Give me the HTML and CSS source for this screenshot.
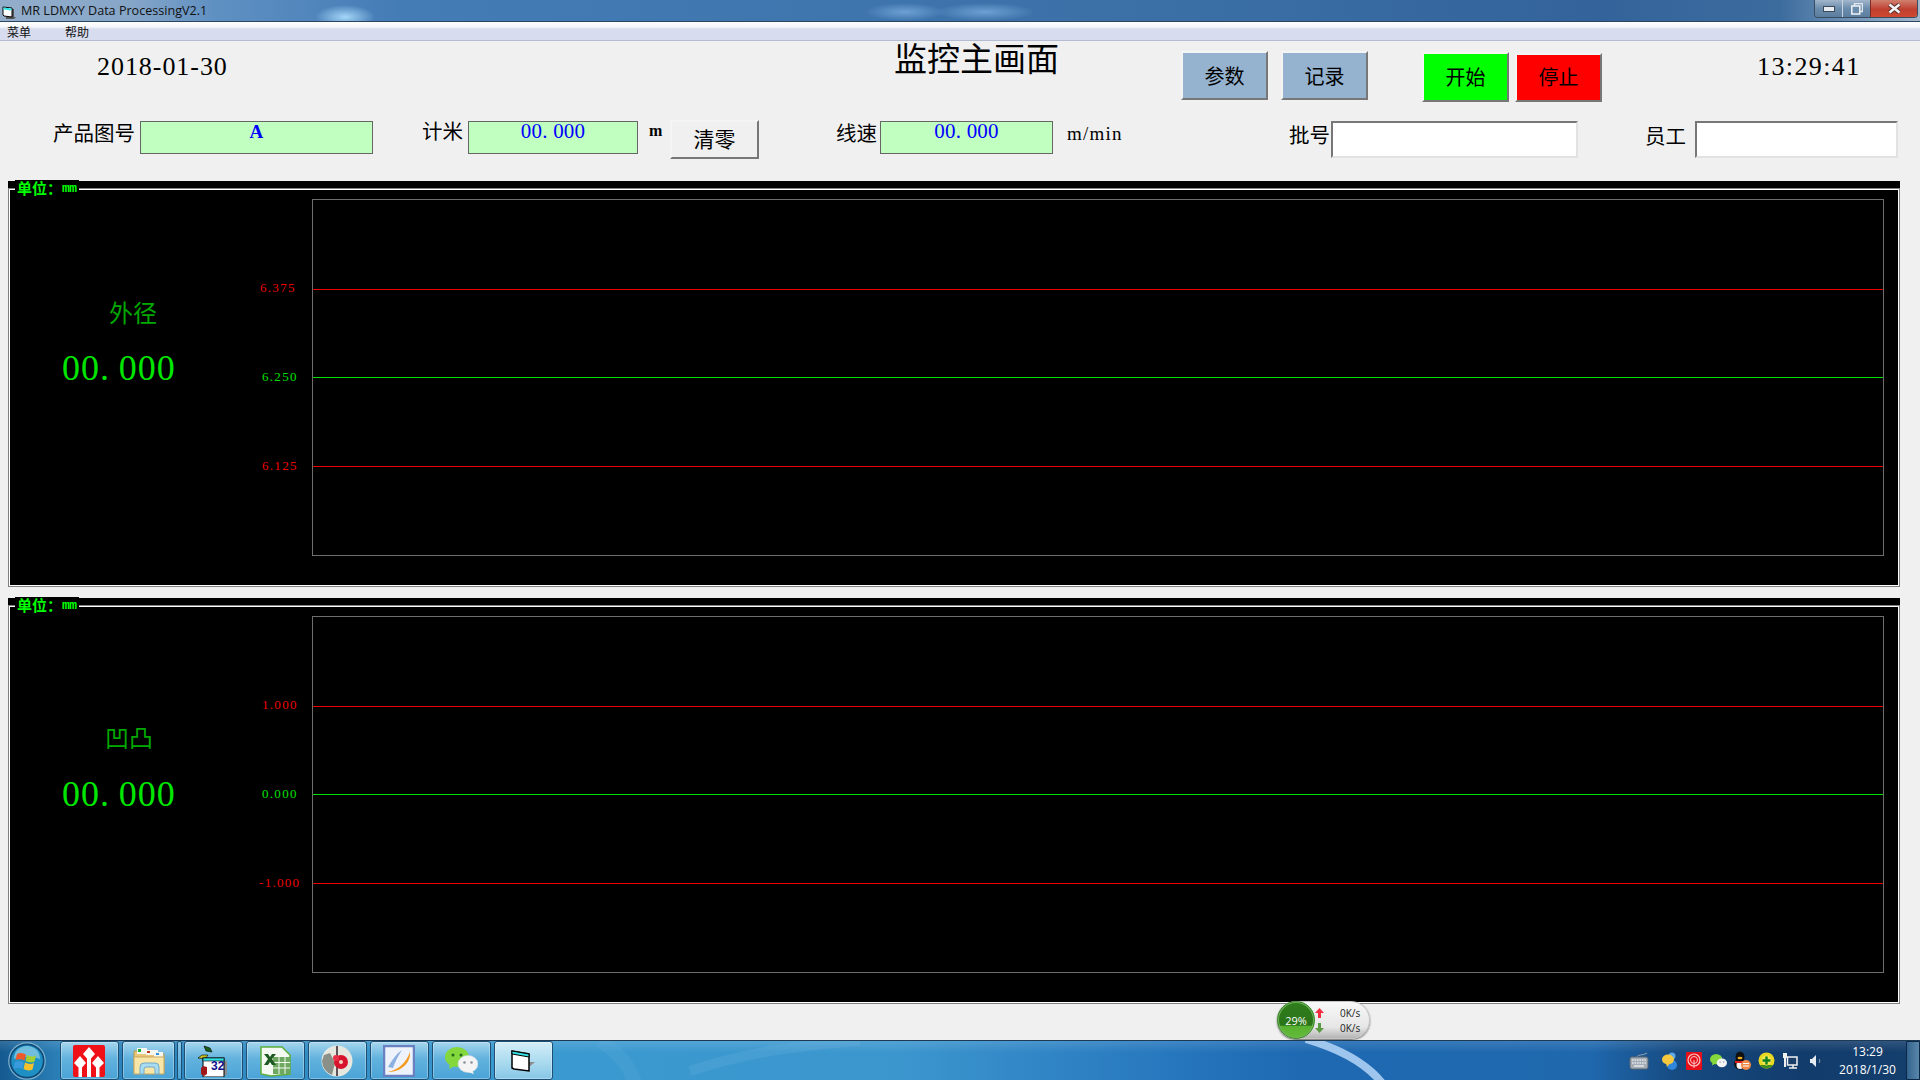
FILE: index.html
```html
<!DOCTYPE html>
<html lang="zh-CN">
<head>
<meta charset="utf-8">
<title>MR LDMXY Data ProcessingV2.1</title>
<link rel="stylesheet" href="styles.css">
</head>
<body>
<header class="titlebar">
  <svg class="app-icon" width="14" height="13" viewBox="0 0 14 13"><path d="M9 3h3v8h2l-2 2H4v-2h5z" fill="#555"/><path d="M1 1l9 1v9l-8-1-1-1z" fill="#fff" stroke="#000"/><path d="M1.500 1.500l8 1v2l-8-1z" fill="#2fe6e6"/></svg>
  <span class="app-title">MR LDMXY Data ProcessingV2.1</span>
  <div class="winbtns">
    <div class="winbtn win-min"><svg width="12" height="6" viewBox="0 0 12 6"><rect x=".5" y=".5" width="11" height="5" fill="#e8edf2" stroke="#3c4a5a"/></svg></div>
    <div class="winbtn win-max"><svg width="12" height="12" viewBox="0 0 12 12"><rect x="3.500" y=".5" width="8" height="8" fill="none" stroke="#dfe6ee" stroke-width="1.500"/><rect x=".8" y="3" width="8" height="8" fill="#6c8cac" stroke="#eef2f6" stroke-width="1.500"/></svg></div>
    <div class="winbtn win-close"><svg width="15" height="11" viewBox="0 0 15 11"><path d="M2.500 1.500l10 8M12.500 1.500l-10 8" stroke="#5a3030" stroke-width="4.500"/><path d="M2.500 1.500l10 8M12.500 1.500l-10 8" stroke="#f4f4f4" stroke-width="2.500"/></svg></div>
  </div>
</header>
<nav class="menubar"><span class="menu-item">菜单</span><span class="menu-item menu-help">帮助</span></nav>

<main class="content">
  <section class="row row-top">
    <div class="clock-text date">2018-01-30</div>
    <h1 class="screen-title">监控主画面</h1>
    <button class="btn btn-blue btn-params">参数</button>
    <button class="btn btn-blue btn-log">记录</button>
    <button class="btn btn-start">开始</button>
    <button class="btn btn-stop">停止</button>
    <div class="clock-text time">13:29:41</div>
  </section>
  <section class="row row-fields">
    <span class="label l-part">产品图号</span>
    <div class="box box-part"><span class="box-text">A</span></div>
    <span class="label l-meter">计米</span>
    <div class="box box-meter"><span class="box-text">00<span class="dot-s">.</span>000</span></div>
    <span class="unit u-m">m</span>
    <button class="btn btn-clear">清零</button>
    <span class="label l-speed">线速</span>
    <div class="box box-speed"><span class="box-text">00<span class="dot-s">.</span>000</span></div>
    <span class="unit u-mmin">m/min</span>
    <span class="label l-batch">批号</span>
    <div class="input in-batch"></div>
    <span class="label l-staff">员工</span>
    <div class="input in-staff"></div>
  </section>

  <section class="panel">
    <div class="legend"><span class="legend-cn">单位：</span><span class="legend-mm">mm</span></div>
    <div class="group">
      <div class="readout readout-a">
        <div class="r-name name-a">外径</div>
        <div class="r-value value-a">00<span class="dot-l">.</span>000</div>
      </div>
      <div class="axis">
        <span class="tick red t-a1">6.375</span>
        <span class="tick green t-a2">6.250</span>
        <span class="tick red t-a3">6.125</span>
      </div>
      <div class="plot">
        <div class="band b1"></div><div class="band b2 line-red"></div><div class="band b3 line-green"></div><div class="band b4 line-red"></div>
      </div>
    </div>
  </section>

  <section class="panel panel-b">
    <div class="legend"><span class="legend-cn">单位：</span><span class="legend-mm">mm</span></div>
    <div class="group">
      <div class="readout readout-b">
        <div class="r-name name-b">凹凸</div>
        <div class="r-value value-b">00<span class="dot-l">.</span>000</div>
      </div>
      <div class="axis">
        <span class="tick red t-b1">1.000</span>
        <span class="tick green t-b2">0.000</span>
        <span class="tick red t-b3">-1.000</span>
      </div>
      <div class="plot">
        <div class="band b1"></div><div class="band b2 line-red"></div><div class="band b3 line-green"></div><div class="band b4 line-red"></div>
      </div>
    </div>
  </section>

  <aside class="netmeter">
    <div class="net-ball">29%</div>
    <div class="net-rows">
      <div class="net-row"><svg width="9" height="10" viewBox="0 0 9 10"><path d="M4.500 0L9 5H6v5H3V5H0z" fill="#f03040"/></svg><span>0K/s</span></div>
      <div class="net-row"><svg width="9" height="10" viewBox="0 0 9 10"><path d="M4.500 10L0 5h3V0h3v5h3z" fill="#5a9a40"/></svg><span>0K/s</span></div>
    </div>
  </aside>
</main>

<footer class="taskbar">
  <svg class="streak" width="1920" height="40" viewBox="0 0 1920 40"><path d="M1306-2C1340 8 1366 22 1382 42" fill="none" stroke="#b4d6f8" stroke-width="8" opacity=".85"/><path d="M690 30C740 14 780 6 860 0" fill="none" stroke="#8cc4ea" stroke-width="10" opacity=".14"/><path d="M600 0C620 12 630 26 635 42" fill="none" stroke="#8cc4ea" stroke-width="14" opacity=".1"/></svg>
  <div class="orb-slot">
    <svg width="38" height="38" viewBox="0 0 38 38">
      <circle cx="19" cy="19" r="18.200" fill="#0f4a78" stroke="#7fb4d0" stroke-width="1.200"/>
      <circle cx="19" cy="19" r="15.800" fill="#1f90c4"/>
      <path d="M6 17c0-8 6-13 13-13s13 5 13 13c-7-3-19-3-26 0z" fill="#a8dcf0" opacity=".6"/>
      <path d="M9 12c3-1.500 6-1 9 .5l-1.500 6c-3-1.500-6-1.500-9-.5z" fill="#ee5a2a"/>
      <path d="M19 13c3 1.500 6 2 9 .5l-1.500 6c-3 1.500-6 1-9-.5z" fill="#a4d034"/>
      <path d="M7 20c3-1 6-1 9 .5L14.500 27c-3-1.500-6-1.500-9-.5z" fill="#3a9ade"/>
      <path d="M17 20.500c3 1.500 6 2 9 .5L24.500 27.500c-3 1.500-6 1-9-.5z" fill="#f6c22c"/>
    </svg>
  </div>
  <div class="tb-btn">
    <svg width="32" height="32" viewBox="0 0 32 32"><rect width="32" height="32" rx="2" fill="#f01018"/><path d="M16 2l6 7-4 4.500V32h-4V13.500L10 9zM7 11l6 7-4 4.500V32H5.500V22.500L1 18zM25 11l6 7-4.500 4.500V32H23V22.500L19 18z" fill="#fff"/></svg>
  </div>
  <div class="tb-btn tb-folder">
    <svg width="32" height="28" viewBox="0 0 32 28"><path d="M1 4h11l2 2h15q2 0 2 2v18H1z" fill="#e8c878" stroke="#b89850"/><rect x="4" y="1" width="10" height="6" fill="#f6f6f0"/><rect x="5" y="2" width="3" height="3" fill="#18b030"/><rect x="13" y="3" width="12" height="5" fill="#f6f6f0"/><rect x="14" y="4" width="3" height="2" fill="#c03820"/><rect x="21" y="5" width="9" height="5" fill="#f6f6f0"/><rect x="23" y="6" width="3" height="2" fill="#3090e0"/><path d="M1 10h30v17H1z" fill="#f8e6a8" stroke="#c8a860"/><path d="M7 27v-7q0-4 4-4h11q4 0 4 4v7h-4v-5q0-2-2-2h-7q-2 0-2 2v5z" fill="#a8dcf0" stroke="#70a8c8"/></svg>
  </div>
  <div class="tb-sliver"></div>
  <div class="tb-btn">
    <svg width="32" height="32" viewBox="0 0 32 32"><rect x="9" y="16" width="21" height="14" fill="#8c8c8c"/><path d="M7 1l6 2 2 4-6-1z" fill="#186018" stroke="#000" stroke-width=".6"/><path d="M1 13l4-3h6l-3 4z" fill="#c8c020" stroke="#000" stroke-width=".6"/><rect x="6" y="13" width="21" height="19" fill="#fff" stroke="#000"/><rect x="6" y="13" width="21" height="3" fill="#30e0e0" stroke="#000" stroke-width=".6"/><path d="M6 21l4 1v7l-3 2-3-2v-6z" fill="#a01818"/><text x="14" y="25" class="icon-num">32</text></svg>
  </div>
  <div class="tb-btn">
    <svg width="31" height="32" viewBox="0 0 31 32"><path d="M1 2h21l8 8v19l-19 2-10-2z" fill="#f4faf2" stroke="#5cae3a" stroke-width="1.500"/><rect x="13" y="12" width="17" height="17" fill="#6ea860"/><path d="M13 17.500h17M13 23h17M19 12v17M25 12v17" stroke="#f4faf2"/><path d="M4 9h4l2 3 2-3h4l-4 5 4 6h-4l-2-3-2 3H4l4-6z" fill="#1c5a20"/></svg>
  </div>
  <div class="tb-btn">
    <svg width="32" height="32" viewBox="0 0 32 32"><circle cx="16" cy="16" r="15.500" fill="#e6e8e0"/><path d="M1 16a15 15 0 0 0 10 14l3-12-5-10-6 2z" fill="#8a9088"/><path d="M16 1v30" stroke="#302028" stroke-width="1.500"/><circle cx="20" cy="17" r="7" fill="#d8142c"/><circle cx="15" cy="13" r="3" fill="#e83048"/><circle cx="20" cy="17" r="2" fill="#f4d0c0"/></svg>
  </div>
  <div class="tb-btn">
    <svg width="32" height="32" viewBox="0 0 32 32"><rect x="1" y="1" width="30" height="30" fill="#eef3fb" stroke="#6a80c0" stroke-width="2.500"/><path d="M5 27c10-2 18-9 22-20 1 10-8 20-22 20z" fill="#f49a1c"/><path d="M5 22C9 15 13 9 19 5 15 11 12 17 10 23z" fill="#8cb0e0"/></svg>
  </div>
  <div class="tb-btn">
    <svg width="33" height="27" viewBox="0 0 33 27"><ellipse cx="12" cy="10" rx="12" ry="10" fill="#84d83c"/><path d="M5 16l-1 6 6-3z" fill="#84d83c"/><circle cx="8" cy="8" r="1.500" fill="#1e6a18"/><circle cx="16" cy="8" r="1.500" fill="#1e6a18"/><ellipse cx="23" cy="17" rx="10" ry="8.500" fill="#f4f4f4" stroke="#c8d8e0" stroke-width=".6"/><path d="M27 23l2 4-6-2z" fill="#f4f4f4"/><circle cx="19.500" cy="15.500" r="1.300" fill="#8a9298"/><circle cx="26.500" cy="15.500" r="1.300" fill="#8a9298"/></svg>
  </div>
  <div class="tb-btn tb-active">
    <svg width="24" height="22" viewBox="0 0 24 22"><path d="M18 12h6l-6 5z" fill="#8c8c8c"/><path d="M1 1l17 3v17l-15-2-2-1z" fill="#fff" stroke="#000" stroke-width="1.500"/><path d="M1 1l17 3v3L1 4z" fill="#30e0e0" stroke="#000"/></svg>
  </div>
  <div class="tb-spacer"></div>
  <div class="tray">
    <div class="tray-item tray-kbd"><svg width="20" height="18" viewBox="0 0 20 18"><path d="M8 5c1-3 5-1 10-4" fill="none" stroke="#9aa6b0"/><rect x="1" y="5" width="18" height="12" rx="2" fill="#a4adb5" stroke="#5a6670"/><path d="M3 8h14M3 11h14" stroke="#e4e8ec" stroke-width="1.500" stroke-dasharray="1.500 1"/><path d="M5 14h10" stroke="#e4e8ec" stroke-width="1.500"/></svg></div>
    <div class="tray-item"><svg width="16" height="18" viewBox="0 0 16 18"><circle cx="10" cy="4" r="3.500" fill="#5aa8e8"/><circle cx="10" cy="13" r="5" fill="#3088dc"/><ellipse cx="6" cy="7.500" rx="6" ry="5" fill="#f6c840"/><path d="M4 11l1 4 3-4z" fill="#f6c840"/></svg></div>
    <div class="tray-item"><svg width="16" height="18" viewBox="0 0 16 18"><rect width="16" height="18" rx="1" fill="#e81018"/><circle cx="8" cy="8" r="6" fill="none" stroke="#f8c8c8" stroke-width="1.200"/><circle cx="8" cy="8" r="3.500" fill="none" stroke="#f8c8c8"/><path d="M8 8v8" stroke="#f8c8c8"/></svg></div>
    <div class="tray-item"><svg width="17" height="16" viewBox="0 0 33 27"><ellipse cx="12" cy="10" rx="12" ry="10" fill="#84d83c"/><path d="M5 16l-1 6 6-3z" fill="#84d83c"/><ellipse cx="23" cy="17" rx="10" ry="8.500" fill="#f4f4f4"/><circle cx="19.500" cy="15.500" r="1.300" fill="#8a9298"/><circle cx="26.500" cy="15.500" r="1.300" fill="#8a9298"/></svg></div>
    <div class="tray-item"><svg width="18" height="20" viewBox="0 0 18 20"><ellipse cx="7" cy="6" rx="4.500" ry="5.500" fill="#111"/><ellipse cx="7" cy="13" rx="6" ry="5.500" fill="#111"/><ellipse cx="7" cy="14" rx="3.500" ry="4" fill="#f4f4f4"/><ellipse cx="7" cy="7" rx="2.500" ry="1.200" fill="#f0b020"/><path d="M2 10h10v2H2z" fill="#e02020"/><circle cx="13" cy="14" r="5" fill="#f08848"/><path d="M10 12.500h6M10 15h6" stroke="#fff"/></svg></div>
    <div class="tray-item"><svg width="17" height="17" viewBox="0 0 17 17"><circle cx="8.500" cy="8.500" r="8" fill="#e8d820"/><path d="M2 13a8 8 0 0 0 13 0" fill="#3c8c20"/><circle cx="8.500" cy="8.500" r="5" fill="#f4e850"/><path d="M8.500 4.500v8M4.500 8.500h8" stroke="#108020" stroke-width="2.400"/></svg></div>
    <div class="tray-item"><svg width="16" height="18" viewBox="0 0 16 18"><path d="M1 1h4v5H4v9H2V6H1z" fill="#f0f0f0"/><rect x="5.500" y="5" width="9.500" height="8" fill="#1a3e68" stroke="#f0f0f0" stroke-width="1.500"/><path d="M7 16h8M11 13v3" stroke="#f0f0f0" stroke-width="1.500"/></svg></div>
    <div class="tray-item tray-vol"><svg width="14" height="14" viewBox="0 0 14 14"><path d="M1 5h2l4-4v12L3 9H1z" fill="#e8ecf0"/><path d="M10 5c1 1 1 3 0 4" fill="none" stroke="#8ca0b4"/></svg></div>
  </div>
  <div class="tb-clock"><span>13:29</span><span>2018/1/30</span></div>
  <div class="show-desktop"></div>
</footer>
</body>
</html>
```
FILE: styles.css
```css
* { box-sizing: border-box; }
html, body { margin: 0; padding: 0; }
body {
  width: 1920px;
  height: 1080px;
  overflow: hidden;
  display: flex;
  flex-direction: column;
  background: #f0f0f0;
  color: #000;
  font-family: "Liberation Serif", "Noto Sans CJK SC", serif;
}

/* window chrome */
.titlebar {
  height: 22px;
  flex: none;
  display: flex;
  align-items: flex-start;
  border-bottom: 1px solid #2b4560;
  background:
    radial-gradient(ellipse 30px 12px at 345px 17px, #a4d6f8, rgba(164, 214, 248, 0)),
    radial-gradient(ellipse 40px 9px at 905px 12px, rgba(130, 180, 230, .7), rgba(130, 180, 230, 0)),
    radial-gradient(ellipse 50px 9px at 985px 12px, rgba(130, 180, 230, .7), rgba(130, 180, 230, 0)),
    linear-gradient(90deg, #93aecb 0, #86a6c8 130px, #5f90c2 215px, #447cb6 400px, #3f76ae 800px, #3a6fa5 1200px, #33639a 1600px, #3c6c9e 1780px, #8ca8c4 1890px, #a4b8cc 1920px);
}
.app-icon { margin: 6px 0 0 2px; flex: none; }
.app-title {
  margin: 3px 0 0 5px;
  font: 12.600px/16px "Open Sans", "Liberation Sans", sans-serif;
  color: #111;
  white-space: nowrap;
}
.winbtns {
  margin: 0 2px 0 auto;
  width: 104px;
  height: 18px;
  display: flex;
  border: 1px solid #3a4c62;
  border-top: 0;
  border-radius: 0 0 4px 4px;
  overflow: hidden;
}
.winbtn { display: flex; align-items: center; justify-content: center; height: 100%; }
.win-min { width: 28px; background: linear-gradient(#a2b6cc, #6c8cac 50%, #5c7e9e); border-right: 1px solid #c8d4e0; }
.win-max { width: 27px; background: linear-gradient(#a2b6cc, #6c8cac 50%, #5c7e9e); }
.win-close { flex: 1; background: linear-gradient(#d08070, #c04030 55%, #d04830); border-left: 1px solid #7a3028; }

.menubar {
  height: 19px;
  flex: none;
  display: flex;
  padding: 3px 0 0 7px;
  font: 12px/14px "Noto Sans CJK SC", sans-serif;
  color: #111;
  border-bottom: 1px solid #b4bcd2;
  background: linear-gradient(#ffffff 0, #f4f6fb 5px, #d8dcef 7px, #d8dcef 100%);
}
.menu-help { margin-left: 34px; }

/* form area */
.content { flex: 1; position: relative; min-height: 0; }
.row { display: flex; align-items: flex-start; white-space: nowrap; }
.row-top { height: 80px; }
.row-fields { height: 60px; }

.clock-text { font-size: 26px; line-height: 30px; margin-top: 11px; }
.date { margin-left: 97px; width: 130px; letter-spacing: .95px; }
.time { margin-left: 155px; width: 103px; letter-spacing: 1.400px; }
.screen-title { margin: 0 0 0 667px; width: 164px; font-size: 33px; font-weight: 400; line-height: 38px; text-align: center; }

.btn {
  display: flex;
  align-items: center;
  justify-content: center;
  padding: 0;
  font-family: inherit;
  font-size: 20px;
  color: #000;
  background: #f0f0f0;
  border: 2px solid;
  border-color: #f4f4f4 #777 #777 #f4f4f4;
}
.btn-blue { background: #95b2cf; width: 87px; height: 49px; margin-top: 10px; }
.btn-params { margin-left: 123px; }
.btn-log { margin-left: 13px; padding-bottom: 1px; }
.btn-start { margin: 11px 0 0 54px; width: 87px; height: 50px; padding-bottom: 2px; background: #00ff00; }
.btn-stop { margin: 12px 0 0 6px; width: 87px; height: 49px; padding-bottom: 3px; background: #ff0000; }
.btn-clear { margin: -1px 0 0 10px; width: 89px; height: 39px; padding-bottom: 4px; font-size: 21px; }

.label { font-size: 20.500px; line-height: 24px; height: 24px; }
.l-part { margin: 1px 0 0 53px; width: 82px; }
.l-meter { margin: -1px 0 0 49px; width: 40px; }
.l-speed { margin: 1px 0 0 77px; width: 41px; }
.l-batch { margin: 3px 0 0 167px; width: 40px; }
.l-staff { margin: 4px 0 0 67px; width: 40px; }

.box {
  height: 33px;
  background: #c0ffc0;
  border: 1px solid #666;
  text-align: center;
  color: #0000ff;
  font-size: 21px;
  line-height: 19px;
  letter-spacing: .2px;
}
.box-part { margin-left: 5px; width: 233px; font-size: 19px; font-weight: 700; }
.box-meter { margin-left: 6px; width: 170px; }
.box-speed { margin-left: 3px; width: 173px; }
.dot-s { padding-right: 5.500px; }

.unit { font-size: 19px; line-height: 24px; }
.u-m { margin: -2px 0 0 11px; width: 11px; font-size: 16px; font-weight: 700; }
.u-mmin { margin: 1px 0 0 14px; width: 55px; letter-spacing: 1.200px; }

.input {
  height: 37px;
  background: #fff;
  border: 2px solid;
  border-color: #777 #e2e2e2 #e2e2e2 #777;
}
.in-batch { margin-left: 2px; width: 247px; }
.in-staff { margin-left: 10px; width: 203px; }

/* chart panels */
.panel {
  position: relative;
  width: 1892px;
  height: 406px;
  margin-left: 8px;
  padding-top: 7px;
  background: #000;
}
.panel-b { margin-top: 11px; }
.group {
  height: 399px;
  display: flex;
  padding: 10px 15px 0 0;
  border: 1px solid #808080;
  box-shadow: inset 0 0 0 1px #fff;
}
.legend {
  position: absolute;
  top: -1px;
  left: 7px;
  height: 15px;
  padding: 0 2px;
  background: #000;
  color: #00ff00;
  display: flex;
  align-items: center;
  white-space: nowrap;
}
.legend-cn { font: 700 15px/15px "Noto Sans CJK SC", sans-serif; }
.legend-mm { font: 700 13px/15px "Liberation Mono", monospace; letter-spacing: -.5px; margin-top: 2px; }

.readout { width: 246px; flex: none; }
.readout-a { padding-top: 100px; }
.readout-b { padding-top: 108px; }
.r-name { font-size: 24px; line-height: 30px; color: #00a800; }
.name-a { margin-left: 100px; }
.name-b { margin-left: 96px; }
.r-value { margin-left: 53px; font-size: 36px; line-height: 40px; letter-spacing: .95px; color: #00e600; }
.value-a { margin-top: 19px; }
.value-b { margin-top: 20px; }
.dot-l { padding-right: 9px; }

.axis { width: 57px; flex: none; display: flex; flex-direction: column; align-items: flex-start; padding-top: 81px; }
.tick { height: 16px; font-size: 13px; line-height: 16px; letter-spacing: 1.300px; }
.red { color: #f00000; }
.green { color: #00e000; }
.t-a1 { margin-left: 5px; }
.t-a2 { margin: 73px 0 0 7px; }
.t-a3 { margin: 73px 0 0 7px; }
.t-b1 { margin-left: 7px; }
.t-b2 { margin: 73px 0 0 7px; }
.t-b3 { margin: 73px 0 0 4px; }

.plot {
  flex: 1;
  height: 357px;
  display: flex;
  flex-direction: column;
  border: 1px solid #6e6e6e;
}
.b1 { height: 89px; }
.b2 { height: 88px; }
.b3 { height: 89px; }
.b4 { height: 88px; }
.line-red { border-top: 1px solid #ee0000; }
.line-green { border-top: 1px solid #00e000; }

/* floating network meter */
.netmeter {
  position: absolute;
  left: 1277px;
  top: 960px;
  width: 93px;
  height: 38px;
  display: flex;
  align-items: center;
  border-radius: 19px;
  border: 1px solid #c4c4c4;
  background: linear-gradient(#f8f8f8, #e6e6e6 70%, #b4b4b4);
  box-shadow: 0 1px 2px #666;
  font: 10px/14px "Open Sans", "Liberation Sans", sans-serif;
  color: #222;
}
.net-ball {
  width: 38px;
  height: 38px;
  margin-left: -1px;
  flex: none;
  border-radius: 50%;
  color: #fff;
  font-size: 11px;
  line-height: 38px;
  text-align: center;
  border: 1px solid #3c8a2a;
  box-shadow: inset 0 0 0 1px #76b860;
  background: linear-gradient(#2f7d1c 0, #2a7418 65%, #58b030 66%, #62bc38 100%);
}
.net-rows { display: flex; flex-direction: column; gap: 1px; }
.net-row { display: flex; align-items: center; height: 14px; }
.net-row span { margin-left: 16px; }

/* taskbar */
.taskbar {
  position: relative;
  height: 40px;
  flex: none;
  display: flex;
  align-items: stretch;
  border-top: 1px solid #1d3a55;
  background:
    linear-gradient(rgba(255, 255, 255, .12), rgba(255, 255, 255, 0) 30%),
    linear-gradient(90deg, #155a90 0, #2b80b8 60px, #3a9ad0 540px, #3c96ce 900px, #2676bd 1180px, #1e69b2 1300px, #1f68ae 1590px, #164a80 1680px, #123c6c 1800px, #143e6c 1920px);
}
.streak { position: absolute; left: 0; top: 0; }
.orb-slot { width: 60px; display: flex; align-items: center; justify-content: flex-start; padding-left: 8px; position: relative; flex: none; }
.tb-btn {
  position: relative;
  width: 58.500px;
  margin-right: 3.500px;
  display: flex;
  align-items: center;
  justify-content: center;
  border: 1px solid #1d4f74;
  border-radius: 3px;
  box-shadow: inset 0 0 0 1px rgba(255, 255, 255, .3);
  background: linear-gradient(#a6d6ee, #62b2de 45%, #4aa4d6 100%);
}
.tb-folder { width: 53px; margin-right: 2px; }
.tb-sliver {
  position: relative;
  width: 5px;
  margin-right: 2px;
  border: 1px solid #1d4f74;
  border-radius: 2px;
  background: linear-gradient(#8cc8e8, #4aa4d6);
}
.tb-active { background: linear-gradient(#d4eef8, #a6d8ee 60%, #86c6e6); }
.tb-spacer { flex: 1; }
.tray { position: relative; display: flex; align-items: center; }
.tray-item { width: 24px; display: flex; justify-content: center; align-items: center; }
.tray-kbd { margin-right: 7px; }
.tray-vol { padding-left: 4px; }
.tb-clock {
  position: relative;
  width: 80px;
  padding-left: 3px;
  display: flex;
  flex-direction: column;
  align-items: center;
  justify-content: center;
  gap: 4px;
  color: #fff;
  font: 12px/14px "Open Sans", "Liberation Sans", sans-serif;
}
.show-desktop {
  position: relative;
  width: 14px;
  border: 1px solid #0c2848;
  border-radius: 1px;
  background: linear-gradient(90deg, #34648e, #5a86aa);
}
.icon-num { font: 700 12px "Liberation Sans", sans-serif; fill: #101090; }
```
